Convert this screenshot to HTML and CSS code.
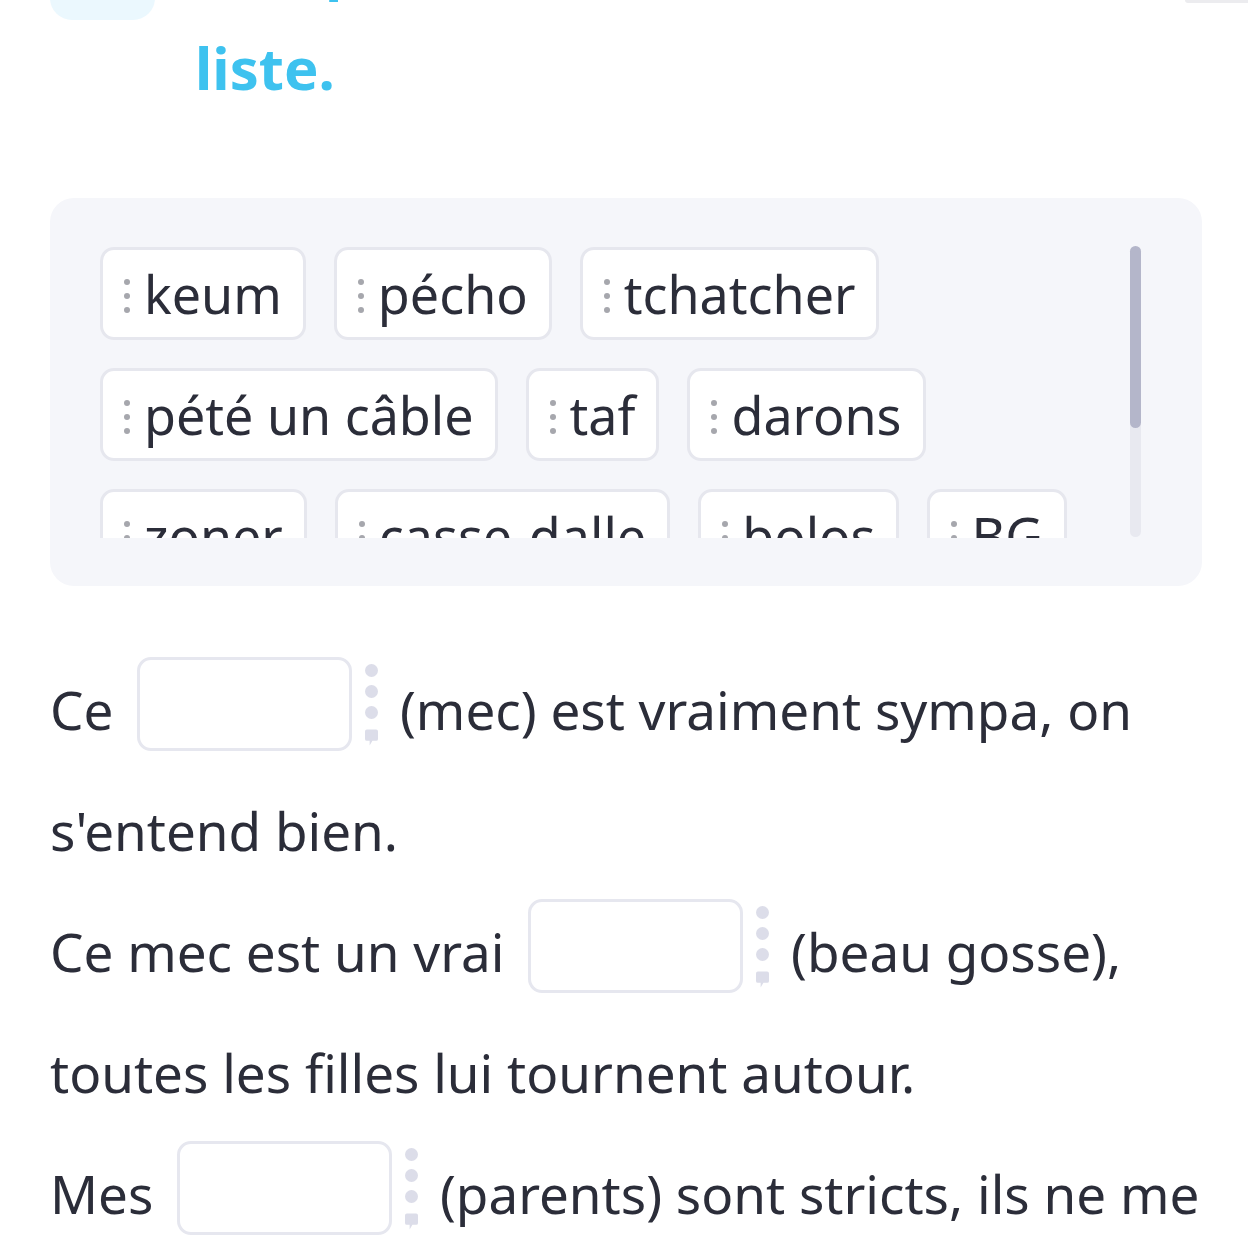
FILE: index.html
```html
<!DOCTYPE html>
<html lang="fr">
<head>
<meta charset="utf-8">
<title>Exercice</title>
<link rel="stylesheet" href="styles.css">
</head>
<body>
<div class="page">
  <header class="header">
    <div class="header-icon"></div>
    <h1 class="title">Complète avec un mot de la<br>liste.</h1>
  </header>

  <section class="bank">
    <div class="bank-chips">
      <div class="chip"><span class="grip"><i></i><i></i><i></i></span>keum</div>
      <div class="chip"><span class="grip"><i></i><i></i><i></i></span>pécho</div>
      <div class="chip"><span class="grip"><i></i><i></i><i></i></span>tchatcher</div>
      <div class="chip"><span class="grip"><i></i><i></i><i></i></span>pété un câble</div>
      <div class="chip"><span class="grip"><i></i><i></i><i></i></span>taf</div>
      <div class="chip"><span class="grip"><i></i><i></i><i></i></span>darons</div>
      <div class="chip"><span class="grip"><i></i><i></i><i></i></span>zoner</div>
      <div class="chip"><span class="grip"><i></i><i></i><i></i></span>casse-dalle</div>
      <div class="chip"><span class="grip"><i></i><i></i><i></i></span>bolos</div>
      <div class="chip"><span class="grip"><i></i><i></i><i></i></span>BG</div>
      <div class="chip"><span class="grip"><i></i><i></i><i></i></span>thune</div>
      <div class="chip"><span class="grip"><i></i><i></i><i></i></span>kiffer</div>
    </div>
    <div class="scrollbar"><div class="thumb"></div></div>
  </section>

  <div class="sentences">
    <p>Ce <span class="blank"></span><span class="handle"><i></i><i></i><i></i><svg viewBox="0 0 14 17"><path d="M2 0h10a2 2 0 0 1 2 2v8a2 2 0 0 1-2 2H8l-3 5v-5H2a2 2 0 0 1-2-2V2a2 2 0 0 1 2-2z"/></svg></span> (mec) est vraiment sympa, on s'entend bien.</p>
    <p>Ce mec est un vrai <span class="blank"></span><span class="handle"><i></i><i></i><i></i><svg viewBox="0 0 14 17"><path d="M2 0h10a2 2 0 0 1 2 2v8a2 2 0 0 1-2 2H8l-3 5v-5H2a2 2 0 0 1-2-2V2a2 2 0 0 1 2-2z"/></svg></span> (beau gosse), toutes les filles lui tournent autour.</p>
    <p>Mes <span class="blank"></span><span class="handle"><i></i><i></i><i></i><svg viewBox="0 0 14 17"><path d="M2 0h10a2 2 0 0 1 2 2v8a2 2 0 0 1-2 2H8l-3 5v-5H2a2 2 0 0 1-2-2V2a2 2 0 0 1 2-2z"/></svg></span> (parents) sont stricts, ils ne me laissent jamais sortir le soir.</p>
  </div>
</div>
<div class="corner-line"></div>
</body>
</html>
```

FILE: styles.css
```css
html, body {
  margin: 0;
  padding: 0;
  background: #ffffff;
  overflow: hidden;
}

body {
  font-family: "Noto Sans", "Open Sans", sans-serif;
  color: #2b2d39;
}

.page {
  padding: 0 40px 0 50px;
}

.corner-line {
  position: absolute;
  top: 0;
  right: 0;
  width: 63px;
  height: 3px;
  background: #ececef;
  border-bottom-left-radius: 3px;
}

.header {
  display: flex;
  align-items: flex-start;
  gap: 40px;
  margin-top: -85px;
  height: 204px;
}

.header-icon {
  width: 105px;
  height: 105px;
  background: #ebf8fe;
  border-radius: 22px;
  flex: none;
}

.title {
  margin: 0;
  font-size: 58px;
  font-weight: 700;
  line-height: 102px;
  color: #3ec2ef;
}

.bank {
  margin-top: 79px;
  width: 1152px;
  box-sizing: border-box;
  background: #f5f6fa;
  border-radius: 24px;
  padding: 48px 11px 48px 50px;
  display: flex;
  gap: 20px;
}

.bank-chips {
  flex: 1;
  height: 291px;
  overflow: hidden;
  display: flex;
  flex-wrap: wrap;
  align-content: flex-start;
  gap: 28px 28px;
  padding-top: 1px;
}

.chip {
  display: inline-flex;
  align-items: center;
  gap: 14px;
  height: 93px;
  box-sizing: border-box;
  padding: 0 21px 0 21px;
  background: #ffffff;
  border: 3px solid #e6e7ee;
  border-radius: 14px;
  font-size: 52px;
  color: #2b2d39;
  white-space: nowrap;
}

.grip {
  display: flex;
  flex-direction: column;
  gap: 8px;
  padding-top: 4px;
}

.grip i {
  display: block;
  width: 6px;
  height: 6px;
  border-radius: 50%;
  background: #a6a7ad;
}

.scrollbar {
  width: 11px;
  height: 291px;
  border-radius: 6px;
  background: #e8e9f0;
  margin-right: 50px;
  flex: none;
}

.thumb {
  height: 182px;
  border-radius: 6px;
  background: #b4b6ca;
}

.sentences {
  margin-top: 63px;
  font-size: 53px;
  line-height: 121px;
  color: #2b2d39;
}

.sentences p {
  margin: 0;
}

.blank {
  display: inline-block;
  width: 215px;
  height: 94px;
  box-sizing: border-box;
  border: 3px solid #e6e7ef;
  border-radius: 14px;
  background: #ffffff;
  vertical-align: -21px;
  margin-left: 10px;
}

.handle {
  display: inline-block;
  width: 14px;
  height: 94px;
  box-sizing: border-box;
  padding-top: 7px;
  margin: 0 8px 0 12px;
  vertical-align: -21px;
}

.handle i {
  display: block;
  width: 13px;
  height: 13px;
  margin: 0 auto 8px;
  border-radius: 50%;
  background: #dcdde9;
}

.handle svg {
  display: block;
  width: 13px;
  height: 17px;
  fill: #dcdde9;
  margin: 10px auto 0;
}
```
